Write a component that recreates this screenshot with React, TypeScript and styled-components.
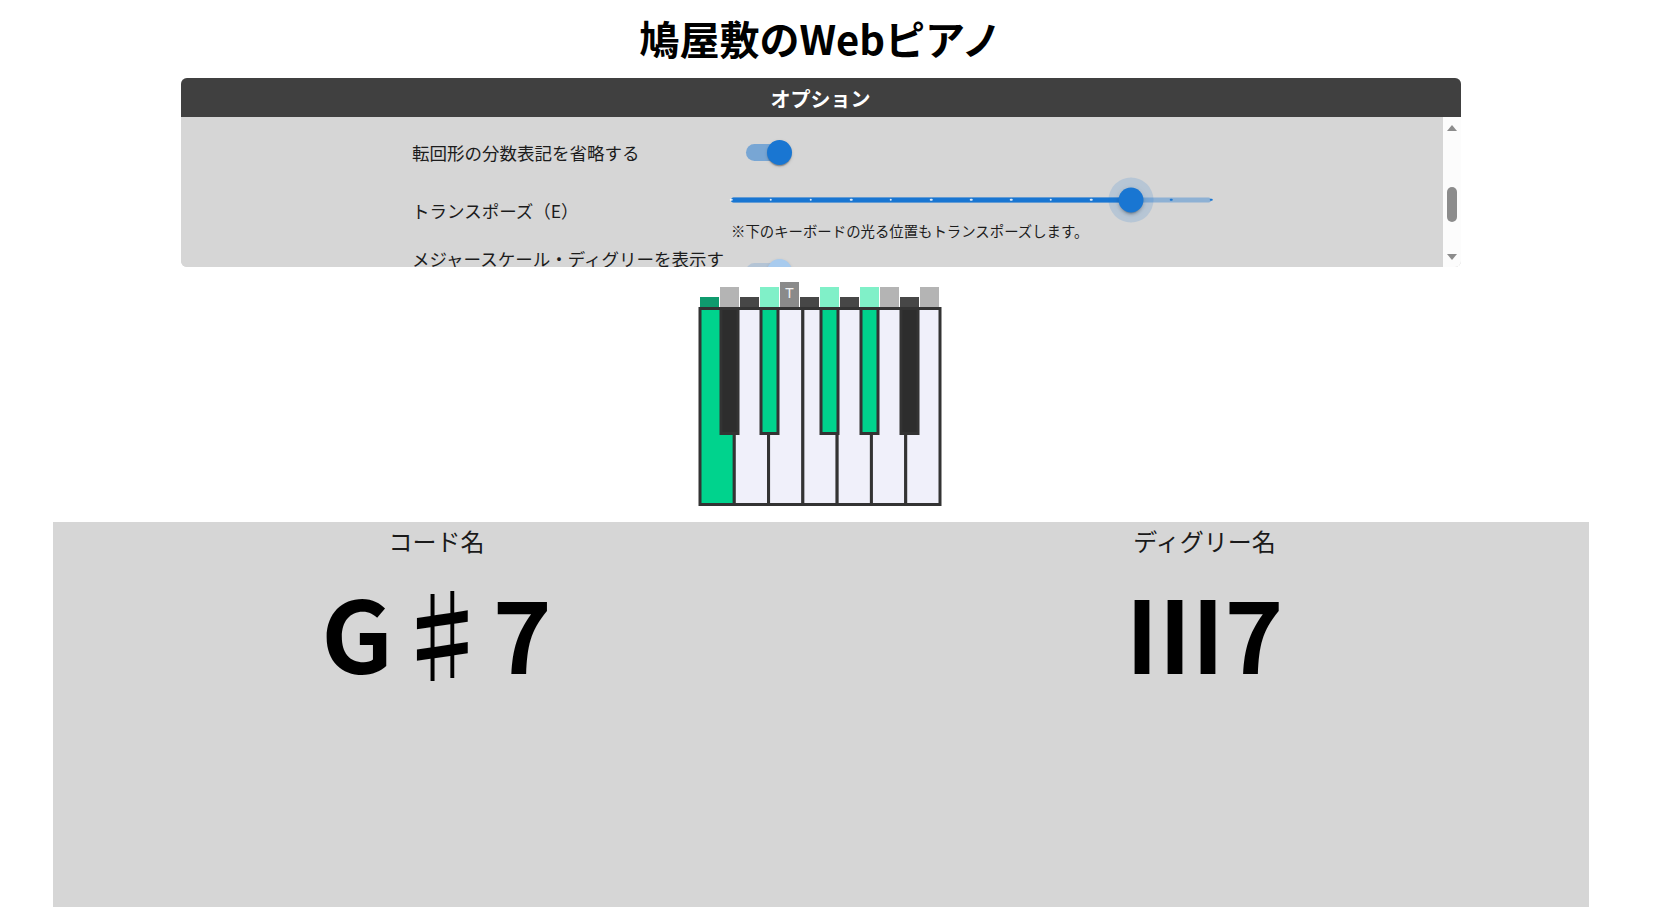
import React from "react";
import styled, { createGlobalStyle } from "styled-components";

const GlobalStyle = createGlobalStyle`
  html, body {
    margin: 0;
    padding: 0;
    background: #ffffff;
  }
  body {
    font-family: "Noto Sans CJK JP", "Noto Sans", sans-serif;
    color: #000000;
  }
`;

const Page = styled.div`
  width: 1641px;
  display: flex;
  flex-direction: column;
  align-items: center;
`;

const Title = styled.h1`
  margin: 9px 0 11px;
  font-size: 40px;
  font-weight: 700;
  line-height: 58px;
  color: #000;
`;

const Panel = styled.section`
  width: 1280px;
  border-radius: 6px;
  overflow: hidden;
  background: #d6d6d6;
`;

const PanelHeader = styled.div`
  height: 39px;
  background: #404040;
  color: #ffffff;
  font-size: 20px;
  font-weight: 700;
  line-height: 41px;
  text-align: center;
  overflow: hidden;
`;

const PanelBody = styled.div`
  display: flex;
  height: 150px;
  background: #d6d6d6;
`;

const OptionViewport = styled.div`
  flex: 1;
  min-width: 0;
  overflow: hidden;
`;

const ScrollGutter = styled.div`
  width: 18px;
  flex: none;
  display: flex;
  flex-direction: column;
  align-items: center;
  background: #fcfcfc;
`;

const ArrowUp = styled.span`
  margin-top: 8px;
  width: 0;
  height: 0;
  border-left: 5.5px solid transparent;
  border-right: 5.5px solid transparent;
  border-bottom: 6px solid #8c8c8c;
`;

const ScrollTrack = styled.div`
  flex: 1;
  display: flex;
  flex-direction: column;
  align-items: center;
  padding-top: 56px;
`;

const ScrollThumb = styled.span`
  width: 10px;
  height: 35px;
  border-radius: 5px;
  background: #8c8c8c;
`;

const ArrowDown = styled.span`
  margin-bottom: 7px;
  width: 0;
  height: 0;
  border-left: 5.5px solid transparent;
  border-right: 5.5px solid transparent;
  border-top: 6px solid #8c8c8c;
`;

const OptionList = styled.div`
  display: flex;
  flex-direction: column;
  padding-top: 10px;
`;

const OptionRow = styled.div<{ $kind: "switch" | "slider" }>`
  display: grid;
  grid-template-columns: 319px 480px;
  justify-content: center;
  align-items: center;
  min-height: ${(p) => (p.$kind === "switch" ? "51px" : "0")};
  padding-top: ${(p) => (p.$kind === "slider" ? "3px" : "0")};
`;

const OptionLabel = styled.div<{ $raise?: number }>`
  font-size: 17.5px;
  line-height: 25.3px;
  color: #1c1c1c;
  padding-bottom: ${(p) => p.$raise ?? 0}px;
`;

const ControlCell = styled.div`
  display: flex;
  flex-direction: column;
  align-items: flex-start;
`;

const SwitchRoot = styled.span`
  position: relative;
  display: inline-block;
  box-sizing: border-box;
  width: 72.5px;
  height: 47.5px;
  padding: 15px;
`;

const SwitchTrack = styled.span<{ $disabled?: boolean }>`
  display: block;
  width: 100%;
  height: 100%;
  border-radius: 8.75px;
  background: #1976d2;
  opacity: ${(p) => (p.$disabled ? 0.18 : 0.5)};
`;

const SwitchThumb = styled.span<{ $disabled?: boolean }>`
  position: absolute;
  top: 11.25px;
  left: 36.25px;
  width: 25px;
  height: 25px;
  border-radius: 50%;
  background: ${(p) => (p.$disabled ? "#a8cbee" : "#1976d2")};
  box-shadow: 0px 2.5px 1.25px -1.25px rgba(0, 0, 0, 0.2),
    0px 1.25px 1.25px 0px rgba(0, 0, 0, 0.14),
    0px 1.25px 3.75px 0px rgba(0, 0, 0, 0.12);
`;

const SliderRoot = styled.span`
  position: relative;
  display: block;
  width: 480px;
  height: 5px;
  padding: 16.25px 0;
`;

const SliderRail = styled.span`
  position: absolute;
  top: 50%;
  left: 0;
  width: 100%;
  height: 5px;
  transform: translateY(-50%);
  border-radius: 2.5px;
  background: #1976d2;
  opacity: 0.38;
`;

const SliderTrack = styled.span`
  position: absolute;
  top: 50%;
  left: 0;
  height: 5px;
  transform: translateY(-50%);
  border-radius: 2.5px;
  background: #1976d2;
`;

const SliderMark = styled.span<{ $active: boolean }>`
  position: absolute;
  top: 50%;
  width: 2.5px;
  height: 2.5px;
  border-radius: 1.25px;
  transform: translate(-1.25px, -50%);
  background: ${(p) => (p.$active ? "rgba(255,255,255,0.85)" : "#1976d2")};
`;

const SliderThumb = styled.span`
  position: absolute;
  top: 50%;
  width: 25px;
  height: 25px;
  border-radius: 50%;
  transform: translate(-50%, -50%);
  background: #1976d2;
  box-shadow: 0 0 0 10px rgba(25, 118, 210, 0.16),
    0px 3.75px 1.25px -2.5px rgba(0, 0, 0, 0.2),
    0px 2.5px 2.5px 0px rgba(0, 0, 0, 0.14),
    0px 1.25px 6.25px 0px rgba(0, 0, 0, 0.12);
`;

const SliderNote = styled.div`
  margin: 2px 0 2px;
  font-size: 14.4px;
  line-height: 20.8px;
  color: #1c1c1c;
`;

const PianoWrap = styled.div`
  margin-top: 13px;
  height: 228px;
`;

const ResultArea = styled.section`
  box-sizing: border-box;
  width: 1536px;
  height: 385px;
  margin-top: 14px;
  padding-top: 2px;
  background: #d6d6d6;
  display: grid;
  grid-template-columns: 1fr 1fr;
  align-content: start;
`;

const ResultColumn = styled.div`
  display: flex;
  flex-direction: column;
  align-items: center;
`;

const ResultLabel = styled.div`
  font-size: 24px;
  line-height: 34.75px;
  color: #1a1a1a;
`;

const ResultValue = styled.div`
  font-size: 100px;
  font-weight: 700;
  line-height: 144.8px;
  color: #000;
`;

function Switch({ disabled }: { disabled?: boolean }) {
  return (
    <SwitchRoot>
      <SwitchTrack $disabled={disabled} />
      <SwitchThumb $disabled={disabled} />
    </SwitchRoot>
  );
}

function Slider({ value, max }: { value: number; max: number }) {
  const pct = (value / max) * 100;
  const marks = Array.from({ length: max + 1 }, (_, i) => i);
  return (
    <SliderRoot>
      <SliderRail />
      <SliderTrack style={{ width: `${pct}%` }} />
      {marks.map((m) => (
        <SliderMark key={m} $active={m <= value} style={{ left: `${(m / max) * 100}%` }} />
      ))}
      <SliderThumb style={{ left: `${pct}%` }} />
    </SliderRoot>
  );
}

const SCALE = new Set([4, 6, 8, 9, 11, 1, 3]);
const PRESSED = new Set([8, 0, 3, 6]);
const TONIC = 4;
const WHITE = [0, 2, 4, 5, 7, 9, 11];
const BLACK = [1, 3, 6, 8, 10];

function cellColor(s: number) {
  const p = PRESSED.has(s);
  if (s === TONIC && !p) return "#8a8a8a";
  if (SCALE.has(s)) return p ? "#80f0c8" : "#b4b4b4";
  return p ? "#0f9b6e" : "#474747";
}

function Keyboard() {
  const whiteW = 240 / 7;
  return (
    <svg width="248" height="228" viewBox="697 280 248 228">
      {Array.from({ length: 12 }, (_, s) => {
        const y = s === TONIC ? 282 : SCALE.has(s) ? 287 : 297;
        return <rect key={s} x={700 + 20 * s} y={y} width={19} height={307 - y} fill={cellColor(s)} />;
      })}
      <text
        x={789.5}
        y={298}
        textAnchor="middle"
        fontSize="15"
        fill="#f2f2f2"
        fontFamily="'Noto Sans', sans-serif"
      >
        T
      </text>
      {WHITE.map((s, k) => (
        <rect
          key={s}
          x={700 + k * whiteW}
          y={308.5}
          width={whiteW}
          height={196}
          fill={PRESSED.has(s) ? "#00d38d" : "#f0f0fa"}
          stroke="#333"
          strokeWidth={3}
        />
      ))}
      {BLACK.map((s) => (
        <rect
          key={s}
          x={701 + 20 * s}
          y={308.5}
          width={17}
          height={125}
          fill={PRESSED.has(s) ? "#00d38d" : "#2d2d2d"}
          stroke="#333"
          strokeWidth={3}
        />
      ))}
    </svg>
  );
}

export default function App() {
  return (
    <>
      <GlobalStyle />
      <Page>
        <Title>鳩屋敷のWebピアノ</Title>
        <Panel>
          <PanelHeader>オプション</PanelHeader>
          <PanelBody>
            <OptionViewport>
              <OptionList>
                <OptionRow $kind="switch">
                  <OptionLabel>転回形の分数表記を省略する</OptionLabel>
                  <ControlCell>
                    <Switch />
                  </ControlCell>
                </OptionRow>
                <OptionRow $kind="slider">
                  <OptionLabel $raise={4}>トランスポーズ（E）</OptionLabel>
                  <ControlCell>
                    <Slider value={10} max={12} />
                    <SliderNote>※下のキーボードの光る位置もトランスポーズします。</SliderNote>
                  </ControlCell>
                </OptionRow>
                <OptionRow $kind="slider">
                  <OptionLabel>メジャースケール・ディグリーを表示する</OptionLabel>
                  <ControlCell>
                    <Switch disabled />
                  </ControlCell>
                </OptionRow>
              </OptionList>
            </OptionViewport>
            <ScrollGutter>
              <ArrowUp />
              <ScrollTrack>
                <ScrollThumb />
              </ScrollTrack>
              <ArrowDown />
            </ScrollGutter>
          </PanelBody>
        </Panel>
        <PianoWrap>
          <Keyboard />
        </PianoWrap>
        <ResultArea>
          <ResultColumn>
            <ResultLabel>コード名</ResultLabel>
            <ResultValue>G♯7</ResultValue>
          </ResultColumn>
          <ResultColumn>
            <ResultLabel>ディグリー名</ResultLabel>
            <ResultValue>III7</ResultValue>
          </ResultColumn>
        </ResultArea>
      </Page>
    </>
  );
}
